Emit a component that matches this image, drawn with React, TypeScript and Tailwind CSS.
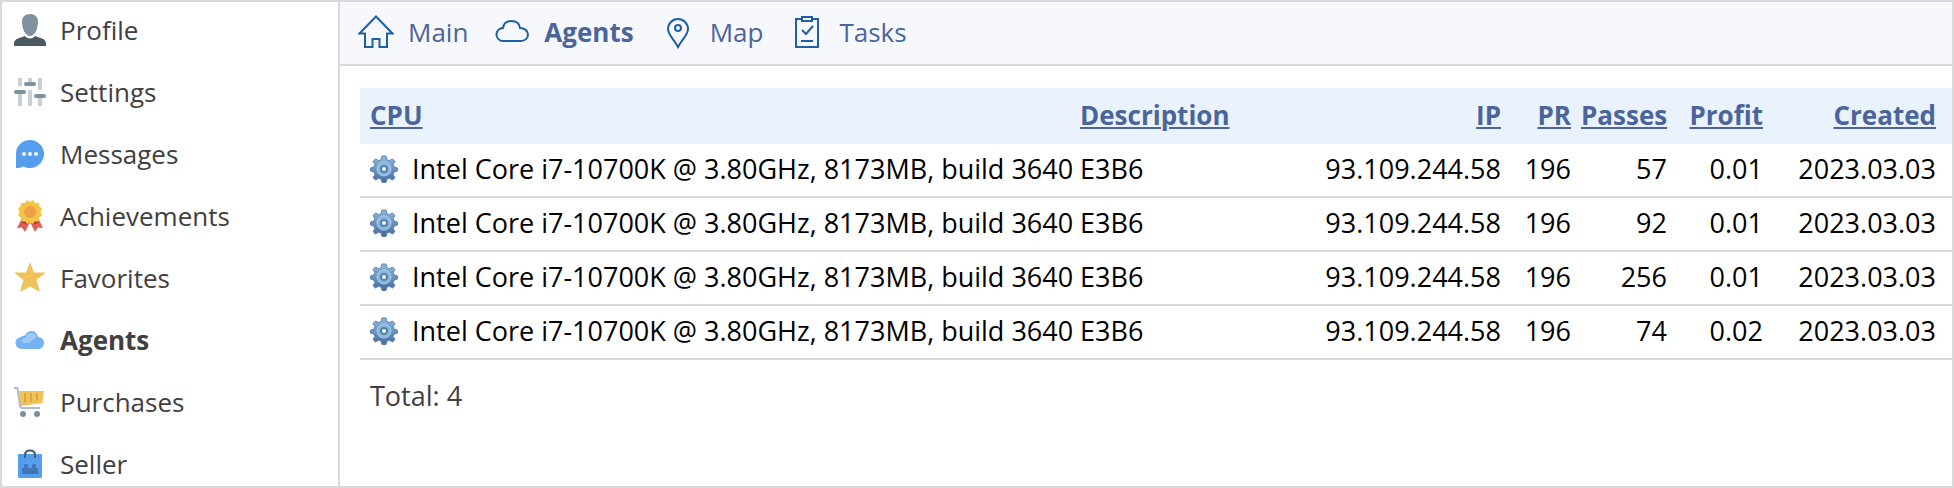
import { ReactNode } from 'react'
import clsx from 'clsx'

const ProfileIcon = () => (
  <svg viewBox="0 0 32 32" className="size-8">
    <path d="M16 0C11 0 8 3 8 8c0 7 3.500 14 8 14s8-7 8-14c0-5-3-8-8-8z" fill="#7f929d" />
    <path d="M11 22l-7 2.500C1.500 25.400 0 27 0 29.500V32h32v-2.500c0-2.500-1.500-4.100-4-5L21 22c-1 1.600-2.800 2.500-5 2.500S12 23.600 11 22z" fill="#495a63" />
  </svg>
)

const SettingsIcon = () => (
  <svg viewBox="0 0 32 32" className="size-8">
    <path d="M4 2h4v8H4zM4 18h4v12H4zM14 2h4v4h-4zM14 14h4v16h-4zM24 2h4v12h-4zM24 22h4v8h-4z" fill="#c7d0d5" />
    <g fill="#7e929e">
      <rect x="0" y="14" width="12" height="4" rx="2" />
      <rect x="10" y="6" width="12" height="4" rx="2" />
      <rect x="20" y="18" width="12" height="4" rx="2" />
    </g>
  </svg>
)

const MessagesIcon = () => (
  <svg viewBox="0 0 32 32" className="size-8">
    <path d="M16 2a14 14 0 1 1-6.500 26.400C7 29.500 4.500 30 2 30V16A14 14 0 0 1 16 2z" fill="#559eee" />
    <g fill="#f2f5f8">
      <circle cx="10" cy="16" r="2" />
      <circle cx="16" cy="16" r="2" />
      <circle cx="22" cy="16" r="2" />
    </g>
  </svg>
)

const AchievementsIcon = () => (
  <svg viewBox="0 0 32 32" className="size-8">
    <path d="M8 18L3 28l5-.5 3 4.500 5-10 5 10 3-4.500 5 .5-5-10z" fill="#df5f57" />
    <path d="M8 19l-1 3c3 3 5 3 9 1 4 2 6 2 9-1l-1-3z" fill="#b9423a" />
    <path
      d="M16 2l3-2 2 3 4 0 .5 3.500L28 8.500 26.500 12l1.500 3.500-3 2-.5 4-4 0L19 24l-3-1.500L13 24l-1.500-2.500-4 0-.5-4-3-2L5.500 12 4 8.500l2.500-2L7 3l4 0 2-3z"
      fill="#f6c444"
    />
    <circle cx="16" cy="12" r="6" fill="#ee9f48" />
  </svg>
)

const FavoritesIcon = () => (
  <svg viewBox="0 0 32 32" className="size-8">
    <path d="M16 0l4 10.500h12l-9.500 7.500L26 30l-10-5.500L6 30l3.500-12L0 10.500h12z" fill="#efc25b" />
  </svg>
)

const AgentsIcon = () => (
  <svg viewBox="0 0 32 32" className="size-8">
    <path d="M8 25a6 6 0 0 1-1-12 4.500 4.500 0 0 1 4-1.500C12 8.500 14.500 7 17.500 7c3.300 0 5.500 1.800 6.500 6 3.500 0 6 2.500 6 6s-2.500 6-6 6z" fill="#76b3f2" />
    <path d="M8 17c0-2 1.500-3 3.500-3 .5-3.500 2.500-5 6-5 3 0 4.500 1.500 4.500 3.500 0 2-1.500 2.500-3 3-1.500.5-2 3.500-5 3.500h-3C9.500 19 8 18.500 8 17z" fill="#9fcaf6" />
  </svg>
)

const PurchasesIcon = () => (
  <svg viewBox="0 0 32 32" className="size-8">
    <path d="M5 5h25l-1.500 12L6.500 20z" fill="#efc25b" />
    <path d="M11 7v9M17 7v8.500M23 7v7.500" stroke="#e0a63a" strokeWidth="2" />
    <path d="M0 2h3.500L6 20c.3 1.500 1 2 2 2h18" fill="none" stroke="#b0bec5" strokeWidth="2" />
    <circle cx="9" cy="28" r="3" fill="#7b909b" />
    <circle cx="23" cy="28" r="3" fill="#7b909b" />
  </svg>
)

const SellerIcon = () => (
  <svg viewBox="0 0 32 32" className="size-8">
    <path d="M4 6h24v22.500a1.500 1.500 0 0 1-1.500 1.500h-21A1.500 1.500 0 0 1 4 28.500z" fill="#559eee" />
    <path d="M8 20h2v-3l1-1h2l1 1v3h4v-3l1-1h2l1 1v3h2v6H8z" fill="#3f76b3" />
    <path d="M11 10V7c0-3 2-4.500 5-4.500S21 4 21 7v3" fill="none" stroke="#4a5d68" strokeWidth="2" />
  </svg>
)

const MainTabIcon = () => (
  <svg viewBox="0 0 36 34" className="h-[34px] w-9" fill="none" stroke="#1f5fa6" strokeWidth="2">
    <path d="M18 1.500L1.500 18.500H7V32h7.500v-8h7v8H29V18.500h5.500z" />
  </svg>
)

const AgentsTabIcon = () => (
  <svg viewBox="0 0 36 34" className="h-[34px] w-9" fill="none" stroke="#1f5fa6" strokeWidth="2">
    <path d="M9 26a6.500 6.500 0 0 1 0-13c.7-4.500 4-7 8.500-7 4.600 0 8 2.500 8.500 7 4.500 0 8 2.800 8 6.500S31 26 27 26z" />
  </svg>
)

const MapTabIcon = () => (
  <svg viewBox="0 0 36 34" className="h-[34px] w-9" fill="none" stroke="#1f5fa6" strokeWidth="2">
    <path d="M18 32C14.500 25 8 20 8 14a10 10 0 0 1 20 0c0 6-6.500 11-10 18z" />
    <circle cx="18" cy="13" r="3" />
  </svg>
)

const TasksTabIcon = () => (
  <svg viewBox="0 0 36 34" className="h-[34px] w-9" fill="none" stroke="#1f5fa6" strokeWidth="2">
    <path d="M13 4H7v28h22V4h-6" />
    <path d="M13 2h10v4H13zM13 15l4 4L24 11M12 26h12" />
  </svg>
)

const GearIcon = () => (
  <svg viewBox="0 0 28 28" className="size-7 shrink-0">
    <defs>
      <linearGradient id="gear" x1="0" y1="0" x2="0" y2="1">
        <stop offset="0" stopColor="#8fbbdf" />
        <stop offset="1" stopColor="#44699f" />
      </linearGradient>
    </defs>
    <g fill="url(#gear)" stroke="#5a83b0" strokeWidth="1">
      <path d="M12 1h4l.8 3.600 2.600 1.100L22.500 4 25 6.500l-1.900 3 1.100 2.500L27.500 13v3l-3.300 1-1.100 2.600 1.900 3-2.500 2.400-3.100-1.800-2.600 1.100L16 27.500h-4l-.8-3.200-2.600-1.100L5.500 25 3 22.600l1.900-3L3.800 17 .5 16v-3l3.300-1 1.100-2.500-1.900-3L5.500 4l3.100 1.700 2.600-1.100z" />
    </g>
    <circle cx="14" cy="14" r="7" fill="#86b8de" stroke="#a9cdea" />
    <circle cx="14" cy="14" r="3" fill="#f4f7fa" stroke="#587fab" strokeWidth="2" />
  </svg>
)

const MENU: { label: string; icon: ReactNode }[] = [
  { label: 'Profile', icon: <ProfileIcon /> },
  { label: 'Settings', icon: <SettingsIcon /> },
  { label: 'Messages', icon: <MessagesIcon /> },
  { label: 'Achievements', icon: <AchievementsIcon /> },
  { label: 'Favorites', icon: <FavoritesIcon /> },
  { label: 'Agents', icon: <AgentsIcon /> },
  { label: 'Purchases', icon: <PurchasesIcon /> },
  { label: 'Seller', icon: <SellerIcon /> },
]

const TABS: { label: string; icon: ReactNode }[] = [
  { label: 'Main', icon: <MainTabIcon /> },
  { label: 'Agents', icon: <AgentsTabIcon /> },
  { label: 'Map', icon: <MapTabIcon /> },
  { label: 'Tasks', icon: <TasksTabIcon /> },
]

const COLUMNS = [
  { label: 'CPU', className: 'w-[710px] pl-2.5 text-left' },
  { label: 'Description', className: 'pl-2.5 text-left' },
  { label: 'IP', className: 'w-[210px] pr-2.5 text-right' },
  { label: 'PR', className: 'w-[70px] pr-2.5 text-right' },
  { label: 'Passes', className: 'w-24 pr-2.5 text-right' },
  { label: 'Profit', className: 'w-24 pr-2.5 text-right' },
  { label: 'Created', className: 'w-[179px] pr-4 text-right' },
]

const CPU = 'Intel Core i7-10700K @ 3.80GHz, 8173MB, build 3640'

const AGENTS = [
  { id: 1, values: ['E3B6', '93.109.244.58', '196', '57', '0.01', '2023.03.03'] },
  { id: 2, values: ['E3B6', '93.109.244.58', '196', '92', '0.01', '2023.03.03'] },
  { id: 3, values: ['E3B6', '93.109.244.58', '196', '256', '0.01', '2023.03.03'] },
  { id: 4, values: ['E3B6', '93.109.244.58', '196', '74', '0.02', '2023.03.03'] },
]

export default function App() {
  const active = 'Agents'

  return (
    <div className="flex min-h-screen border-2 border-[#d9d9d9] bg-white font-['Trebuchet_MS','Open_Sans',sans-serif] text-[26px] leading-8 text-[#404040]">
      {/* Sidebar */}
      <nav className="w-[338px] shrink-0 border-r-2 border-[#d9d9d9] pt-3 pb-1 pl-3">
        <ul className="flex flex-col gap-[30px]">
          {MENU.map((item) => (
            <li key={item.label}>
              <a href="#" className={clsx('flex h-8 items-center gap-3.5', item.label === active && 'font-bold')}>
                {item.icon}
                {item.label}
              </a>
            </li>
          ))}
        </ul>
      </nav>

      <div className="min-w-0 grow">
        {/* Tabs */}
        <nav className="flex h-16 items-center gap-[26px] border-b-2 border-[#d9d9d9] bg-[#f7f8fe] pb-0.5 pl-[18px] text-[#4a659b]">
          {TABS.map((tab) => (
            <a key={tab.label} href="#" className={clsx('flex items-center gap-3.5', tab.label === active && 'font-bold')}>
              {tab.icon}
              {tab.label}
            </a>
          ))}
        </nav>

        <main className="pt-[22px] pl-5">
          <table className="w-full table-fixed border-separate border-spacing-0 text-black">
            <thead>
              <tr className="h-14 bg-[#eaf3fd] text-[#4a659b]">
                {COLUMNS.map((col) => (
                  <th key={col.label} className={clsx('pb-0.5 font-bold', col.className)}>
                    <a href="#" className="underline decoration-2 underline-offset-2">
                      {col.label}
                    </a>
                  </th>
                ))}
              </tr>
            </thead>
            <tbody className="text-[27px]">
              {AGENTS.map((agent) => (
                <tr key={agent.id} className="h-[54px]">
                  <td className="border-b-2 border-[#d9d9d9] pb-0.5 pl-2.5">
                    <div className="flex items-center gap-3.5 whitespace-nowrap">
                      <GearIcon />
                      {CPU}
                    </div>
                  </td>
                  {agent.values.map((value, i) => (
                    <td key={i} className={clsx('border-b-2 border-[#d9d9d9] pb-0.5', COLUMNS[i + 1].className)}>
                      {value}
                    </td>
                  ))}
                </tr>
              ))}
            </tbody>
          </table>
          <p className="pt-5 pl-2.5 text-[27px]">Total: {AGENTS.length}</p>
        </main>
      </div>
    </div>
  )
}
